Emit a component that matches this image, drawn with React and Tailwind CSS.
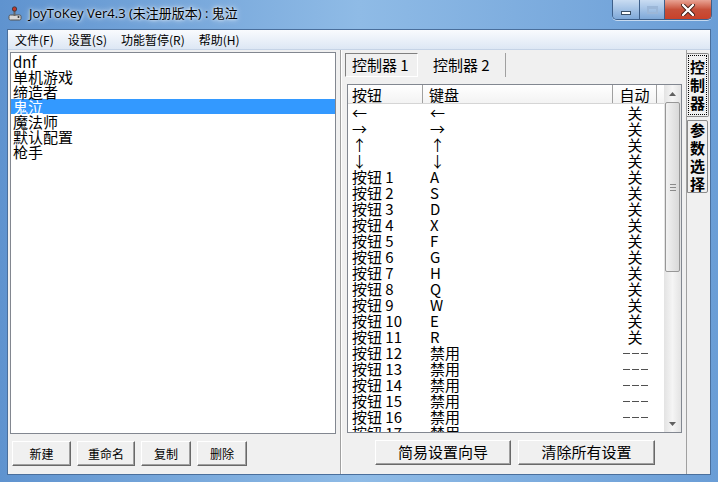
import React from "react";

const CJK = { fontFamily: '"Noto Sans CJK SC", "Noto Sans", sans-serif' };

const profiles = ["dnf", "单机游戏", "缔造者", "鬼泣", "魔法师", "默认配置", "枪手"];

const keys = ["A", "S", "D", "X", "F", "G", "H", "Q", "W", "E", "R"];
const rows = [
  ["←", "←", "关"],
  ["→", "→", "关"],
  ["↑", "↑", "关"],
  ["↓", "↓", "关"],
  ...keys.map((k, i) => [`按钮 ${i + 1}`, k, "关"]),
  ...[12, 13, 14, 15, 16, 17].map((n) => [`按钮 ${n}`, "禁用", "---"]),
];

function Btn({ children, className = "" }) {
  return (
    <button
      className={
        "h-[25px] flex items-center justify-center bg-[#f0f0f0] border border-t-white border-l-white border-r-[#696969] border-b-[#696969] shadow-[inset_-1px_-1px_0_#a0a0a0] text-black " +
        className
      }
    >
      {children}
    </button>
  );
}

function TitleBar() {
  return (
    <div className="h-[30px] flex items-start">
      <div className="flex items-center h-[28px] pl-[7px] gap-[6px]">
        <svg width="16" height="16" viewBox="0 0 16 16">
          <rect x="2" y="9" width="12" height="5" rx="1.5" fill="#d8d8d8" stroke="#555" strokeWidth="1" />
          <rect x="6.5" y="2" width="2" height="8" fill="#666" />
          <circle cx="7.5" cy="3" r="2.2" fill="#c0392b" stroke="#333" strokeWidth="0.8" />
          <circle cx="11.5" cy="11" r="1" fill="#333" />
        </svg>
        <span
          className="text-[13px] text-black [text-shadow:0_0_6px_#fff,0_0_3px_#fff]"
          style={{ fontFamily: '"Open Sans", "Noto Sans CJK SC", sans-serif' }}
        >
          JoyToKey Ver4.3 (未注册版本) : 鬼泣
        </span>
      </div>
      <div className="ml-auto mr-[6px] flex h-[20px] rounded-b-[5px] border border-t-0 border-[#3d5f8a] overflow-hidden shadow-[0_1px_0_rgba(255,255,255,0.6)]">
        <div className="w-[27px] h-full flex items-center justify-center bg-gradient-to-b from-[#c9dcf2] to-[#7ea8d8] border-r border-[#3d5f8a]">
          <div className="w-[10px] h-[4px] bg-white border border-[#3a4f66] mt-[6px]" />
        </div>
        <div className="w-[25px] h-full flex items-center justify-center bg-gradient-to-b from-[#c9dcf2] to-[#7ea8d8] border-r border-[#3d5f8a]">
          <div className="w-[11px] h-[8px] border-2 border-t-[3px] border-[#9cb7d8]" />
        </div>
        <div className="w-[46px] h-full flex items-center justify-center bg-gradient-to-b from-[#e8a394] via-[#c7503a] to-[#c8412a]">
          <svg width="14" height="12" viewBox="0 0 14 12">
            <path d="M2 1 L12 11 M12 1 L2 11" stroke="#3a1a14" strokeWidth="4" strokeLinecap="round" />
            <path d="M2 1 L12 11 M12 1 L2 11" stroke="#fff" strokeWidth="2.4" strokeLinecap="round" />
          </svg>
        </div>
      </div>
    </div>
  );
}

function MenuBar() {
  return (
    <div
      className="h-[20px] flex items-center gap-[14px] pl-[7px] text-[12px] text-black bg-gradient-to-b from-[#f9fbfe] to-[#dde7f4] border-b border-[#c5d3e6]"
      style={CJK}
    >
      <span>文件(F)</span>
      <span>设置(S)</span>
      <span>功能暂停(R)</span>
      <span>帮助(H)</span>
    </div>
  );
}

function LeftPanel() {
  return (
    <div className="w-[329px] flex flex-col pl-[2px] pt-[2px]">
      <div className="h-[382px] w-[326px] bg-white border border-[#828790] pt-[1px]" style={CJK}>
        {profiles.map((p) => (
          <div
            key={p}
            className={
              "h-[15px] leading-[15px] text-[15px] pl-[2px] " +
              (p === "鬼泣" ? "bg-[#3399ff] text-white" : "text-black")
            }
          >
            {p}
          </div>
        ))}
      </div>
      <div className="flex gap-[6px] mt-[7px] pl-[2px] text-[12px]" style={CJK}>
        <Btn className="w-[59px]">新建</Btn>
        <Btn className="w-[58px]">重命名</Btn>
        <Btn className="w-[50px]">复制</Btn>
        <Btn className="w-[50px]">删除</Btn>
      </div>
    </div>
  );
}

function ScrollBar() {
  return (
    <div className="w-[17px] h-full flex flex-col bg-gradient-to-r from-[#e3e3e3] via-[#f5f5f5] to-[#e3e3e3]">
      <div className="h-[17px] flex items-center justify-center">
        <svg width="7" height="4" viewBox="0 0 7 4">
          <path d="M0 4 L3.5 0 L7 4 Z" fill="#606060" />
        </svg>
      </div>
      <div className="h-[170px] mx-[1px] rounded-[2px] border border-[#979797] bg-gradient-to-r from-[#f2f2f2] to-[#d9d9d9] flex flex-col items-center justify-center gap-[2px]">
        <div className="w-[6px] h-px bg-[#8a8a8a]" />
        <div className="w-[6px] h-px bg-[#8a8a8a]" />
        <div className="w-[6px] h-px bg-[#8a8a8a]" />
      </div>
      <div className="flex-1" />
      <div className="h-[17px] flex items-center justify-center">
        <svg width="7" height="4" viewBox="0 0 7 4">
          <path d="M0 0 L3.5 4 L7 0 Z" fill="#606060" />
        </svg>
      </div>
    </div>
  );
}

function ListView() {
  return (
    <div className="h-[349px] w-[335px] border border-[#828790] bg-white flex" style={CJK}>
      <div className="flex-1 flex flex-col overflow-hidden">
        <div className="h-[19px] flex items-center text-[15px] leading-[17px] text-black border-b border-[#d5d5d5] bg-gradient-to-b from-white to-[#f3f3f3]">
          <div className="w-[75px] h-full flex items-center pl-[4px] border-r border-[#a0a0a0]">按钮</div>
          <div className="w-[190px] h-full flex items-center pl-[6px] border-r border-[#a0a0a0]">键盘</div>
          <div className="w-[44px] h-full flex items-center justify-center border-r border-[#a0a0a0]">自动</div>
          <div className="flex-1" />
        </div>
        <div className="flex-1 overflow-hidden pt-[1px] text-[15px] leading-[16px] text-black">
          {rows.map(([a, b, c], i) => (
            <div key={i} className="h-[16px] flex whitespace-pre">
              <div className="w-[75px] pl-[4px]">{a}</div>
              <div className="w-[190px] pl-[7px]">{b}</div>
              {c === "---" ? (
                <div className="w-[44px] flex items-center justify-center gap-[2px]">
                  <span className="w-[7px] h-px bg-[#505050]" />
                  <span className="w-[7px] h-px bg-[#505050]" />
                  <span className="w-[7px] h-px bg-[#505050]" />
                </div>
              ) : (
                <div className="w-[44px] text-center">{c}</div>
              )}
            </div>
          ))}
        </div>
      </div>
      <ScrollBar />
    </div>
  );
}

function RightPanel() {
  return (
    <div className="flex-1 flex">
      <div className="w-[347px] flex flex-col border-l border-[#a0a0a0] border-r border-r-[#a0a0a0] pl-[6px] pt-[3px] shadow-[inset_1px_0_0_#fff]">
        <div className="h-[24px] flex items-stretch text-[15px] text-black" style={CJK}>
          <div className="w-[73px] flex items-center pl-[6px] border border-t-[#808080] border-l-[#808080] border-r-white border-b-white bg-[#f0f0f0] ml-[-2px]">
            控制器 1
          </div>
          <div className="w-[83px] flex items-center pl-[10px] border-r border-[#a0a0a0] ml-[5px]">
            控制器 2
          </div>
        </div>
        <div className="mt-[7px]">
          <ListView />
        </div>
        <div className="flex gap-[7px] mt-[7px] pl-[28px] text-[15px]" style={CJK}>
          <Btn className="w-[136px]">简易设置向导</Btn>
          <Btn className="w-[137px]">清除所有设置</Btn>
        </div>
      </div>
      <div className="w-[23px] flex flex-col pt-[3px] text-[15px] leading-[18px] font-bold text-black" style={CJK}>
        <div className="w-[22px] h-[64px] flex flex-col items-center justify-center bg-[#f0f0f0] border border-l-0 border-[#8a8a8a] rounded-r-[2px]">
          <div className="w-[19px] h-[60px] border border-dotted border-black flex flex-col items-center justify-center">
            <span>控</span>
            <span>制</span>
            <span>器</span>
          </div>
        </div>
        <div className="w-[21px] h-[73px] mt-[3px] flex flex-col items-center justify-center bg-[#f0f0f0] border border-[#8a8a8a] rounded-r-[2px]">
          <span>参</span>
          <span>数</span>
          <span>选</span>
          <span>择</span>
        </div>
      </div>
    </div>
  );
}

export default function App() {
  return (
    <div className="w-[718px] h-[482px] flex flex-col overflow-hidden bg-gradient-to-r from-[#5f93cf] via-[#8fbbe6] to-[#6a9dd6]">
      <TitleBar />
      <div className="flex-1 flex px-[8px] pb-[8px]">
        <div className="flex-1 flex flex-col bg-[#f0f0f0] shadow-[0_0_0_1px_#4a6f9c]">
          <MenuBar />
          <div className="flex-1 flex">
            <LeftPanel />
            <div className="w-[3px]" />
            <RightPanel />
          </div>
        </div>
      </div>
    </div>
  );
}
